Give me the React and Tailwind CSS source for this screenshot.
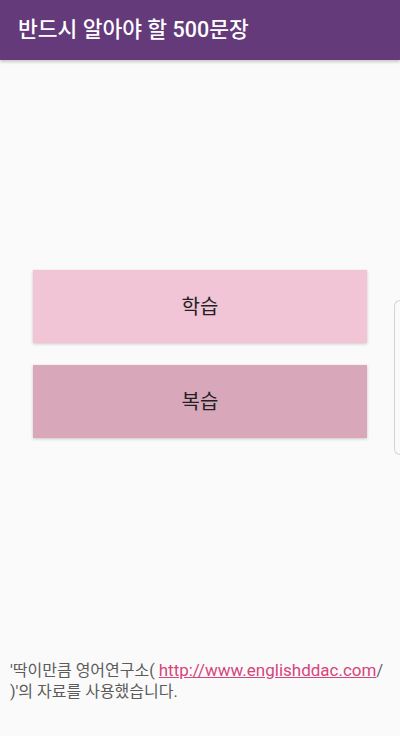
import React from "react";

const App = () => {
  return (
    <div
      className="relative w-[400px] h-[736px] flex flex-col bg-[#fafafa] overflow-hidden"
      style={{ fontFamily: 'Roboto, "Noto Sans CJK KR", sans-serif' }}
    >
      {/* toolbar */}
      <div className="h-[60px] shrink-0 bg-[#643a7b] flex items-center px-[18px] shadow-[0_2px_3px_rgba(0,0,0,0.2)]">
        <h1 className="text-white text-[21.5px] leading-none font-medium">
          반드시 알아야 할 500문장
        </h1>
      </div>

      <div className="flex-1 flex flex-col items-center pt-[210px]">
        <button className="w-[334px] h-[73px] bg-[#f1c4d6] text-[#222] text-[20px] shadow-[0_1px_3px_rgba(0,0,0,0.2)]">
          학습
        </button>
        <button className="mt-[22px] w-[334px] h-[73px] bg-[#d9a7ba] text-[#222] text-[20px] shadow-[0_1px_3px_rgba(0,0,0,0.2)]">
          복습
        </button>
      </div>

      <p className="px-[10px] pb-[34px] text-[16px] leading-[21px] text-[#5c5c5c]">
        '딱이만큼 영어연구소({" "}
        <a className="text-[17px] text-[#d6457b] underline" href="#">
          http://www.englishddac.com
        </a>
        / )'의 자료를 사용했습니다.
      </p>

      {/* edge handle */}
      <div className="absolute right-0 top-[300px] w-[6px] h-[155px] border border-r-0 border-[#d4d4d4] rounded-l-[6px] bg-[#fafafa]" />
    </div>
  );
};

export default App;
